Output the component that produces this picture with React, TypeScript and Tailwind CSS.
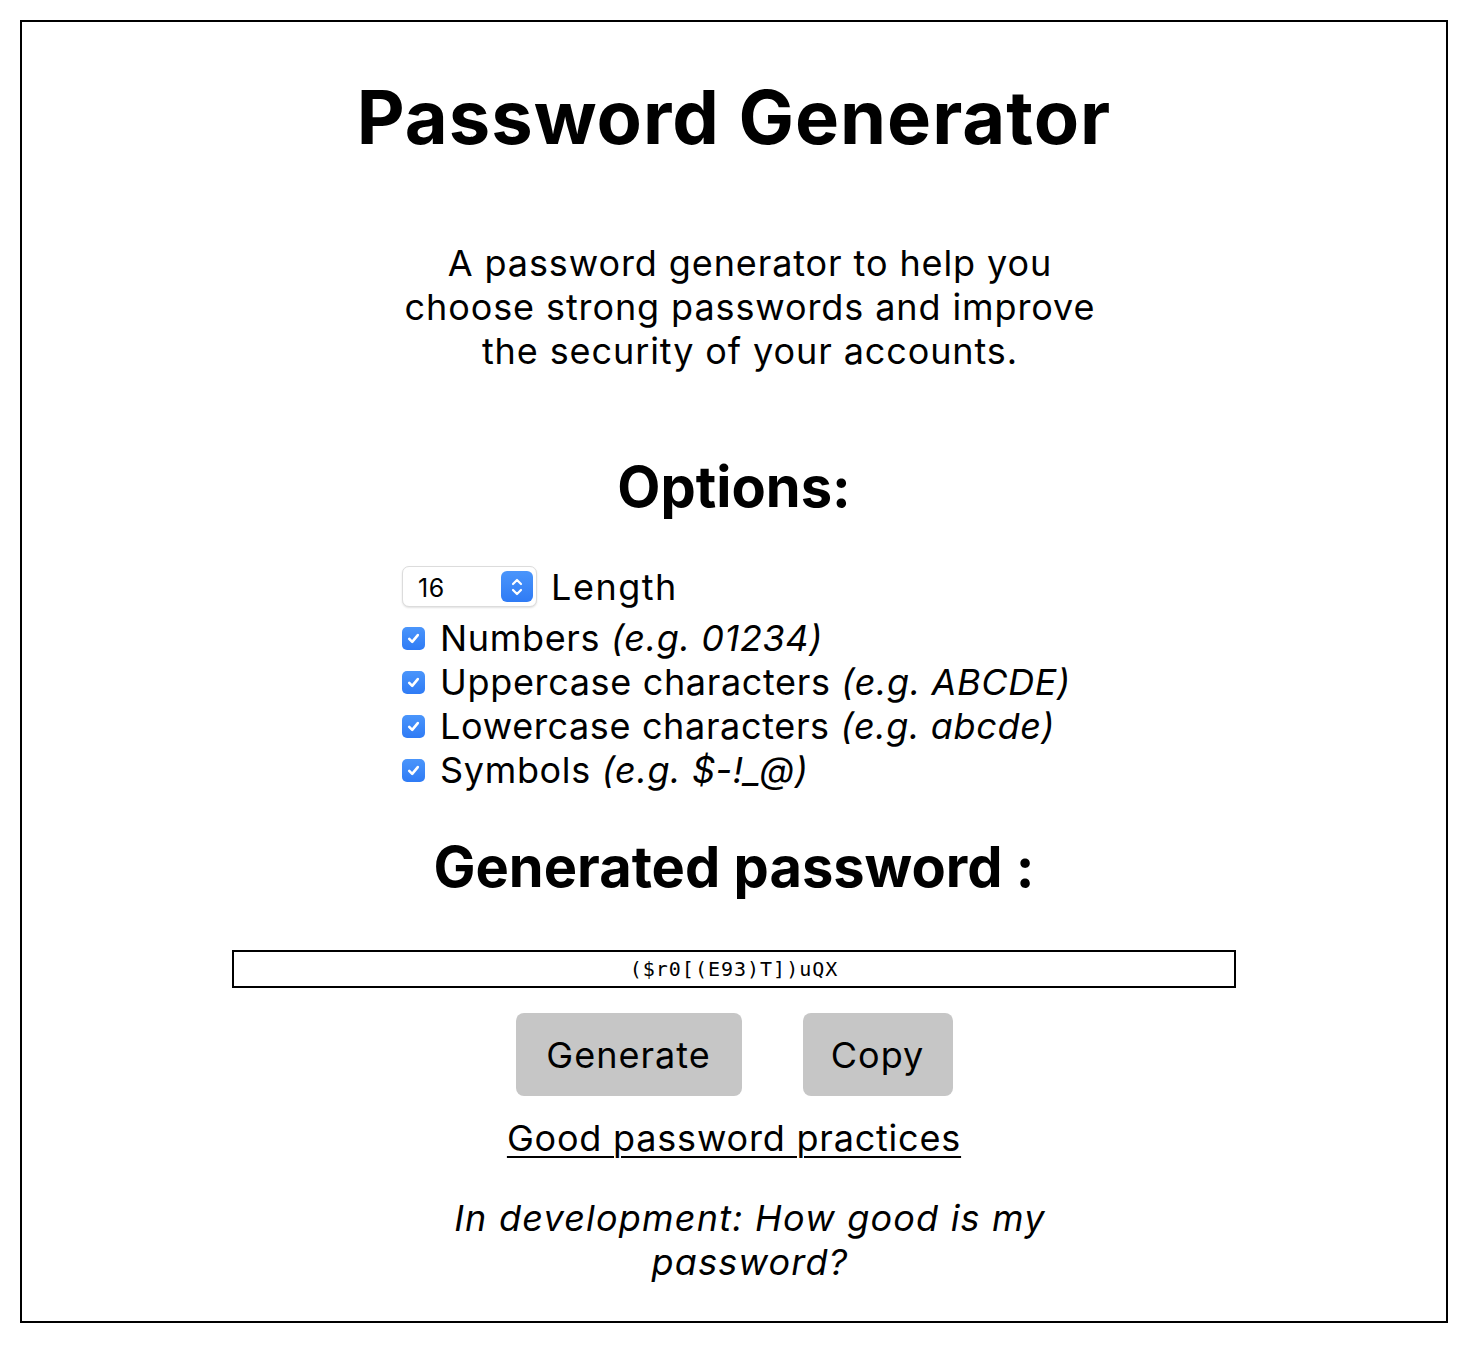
import React from "react";

function Check() {
  return (
    <span className="inline-flex h-[23px] w-[23px] shrink-0 items-center justify-center rounded-[5px] bg-gradient-to-b from-[#4a95fb] to-[#2f7bf5]">
      <svg width="15" height="15" viewBox="0 0 14 14" fill="none">
        <path d="M3 7.4 L5.8 10.2 L11 3.8" stroke="white" strokeWidth="2.4" strokeLinecap="round" strokeLinejoin="round" />
      </svg>
    </span>
  );
}

function Row({ label, example }: { label: string; example: string }) {
  return (
    <div className="flex h-[44px] items-center">
      <Check />
      <span className="ml-[15px]">
        {label} <i>{example}</i>
      </span>
    </div>
  );
}

export default function App() {
  return (
    <div className="bg-white p-5" style={{ fontFamily: "Inter, 'Noto Sans', sans-serif" }}>
      <div className="box-border flex h-[1303px] w-[1428px] flex-col items-center border-2 border-black text-black">
        <h1 className="mt-[55px] text-[74px] font-bold leading-[80px] tracking-[1px]">Password Generator</h1>
        <p className="ml-[32px] mt-[84px] w-[712px] text-center text-[36px] leading-[44px] tracking-[0.9px]">
          A password generator to help you choose strong passwords and improve the security of your accounts.
        </p>
        <h2 className="mt-[84px] text-[56px] font-bold leading-[60px]">Options:</h2>
        <div className="ml-[5px] mt-[49px] flex w-fit flex-col text-[36px] leading-[44px] tracking-[0.65px]">
          <div className="mb-[9px] flex h-[41px] items-center">
            <div className="relative flex h-[41px] w-[135px] items-center rounded-[7px] border border-[#dcdcdc] bg-white shadow-[0_1px_2px_rgba(0,0,0,0.12)]">
              <span className="ml-[15px] pt-[4px] text-[25px] leading-none tracking-[0.5px]">16</span>
              <span className="absolute right-[3px] top-[4px] flex h-[31px] w-[32px] items-center justify-center rounded-[6px] bg-gradient-to-b from-[#4a95fb] to-[#2f7bf5]">
                <svg width="16" height="24" viewBox="0 0 16 24" fill="none">
                  <path d="M4 9 L8 5 L12 9" stroke="white" strokeWidth="2.2" strokeLinecap="round" strokeLinejoin="round" />
                  <path d="M4 15 L8 19 L12 15" stroke="white" strokeWidth="2.2" strokeLinecap="round" strokeLinejoin="round" />
                </svg>
              </span>
            </div>
            <span className="ml-[14px] tracking-[1.5px]">Length</span>
          </div>
          <Row label="Numbers" example="(e.g. 01234)" />
          <Row label="Uppercase characters" example="(e.g. ABCDE)" />
          <Row label="Lowercase characters" example="(e.g. abcde)" />
          <Row label="Symbols" example="(e.g. $-!_@)" />
        </div>
        <h2 className="mt-[45px] text-[56px] font-bold leading-[60px]">Generated password :</h2>
        <div className="mt-[53px] flex h-[38px] w-[1004px] items-center justify-center border-2 border-black">
          <span className="text-[20px] tracking-[1px]" style={{ fontFamily: "'DejaVu Sans Mono', monospace" }}>
            ($r0[(E93)T])uQX
          </span>
        </div>
        <div className="mt-[25px] flex gap-[61px]">
          <button className="h-[83px] w-[226px] rounded-[8px] bg-[#c6c6c6] text-[36px] tracking-[1px]">Generate</button>
          <button className="h-[83px] w-[150px] rounded-[8px] bg-[#c6c6c6] text-[36px] tracking-[1px]">Copy</button>
        </div>
        <a href="#" className="mt-[20px] text-[36px] leading-[44px] tracking-[0.8px] text-black underline decoration-[2px] underline-offset-[5px]">
          Good password practices
        </a>
        <p className="ml-[32px] mt-[36px] w-[640px] text-center text-[36px] italic leading-[44px] tracking-[1.2px]">
          In development: How good is my password?
        </p>
      </div>
    </div>
  );
}
